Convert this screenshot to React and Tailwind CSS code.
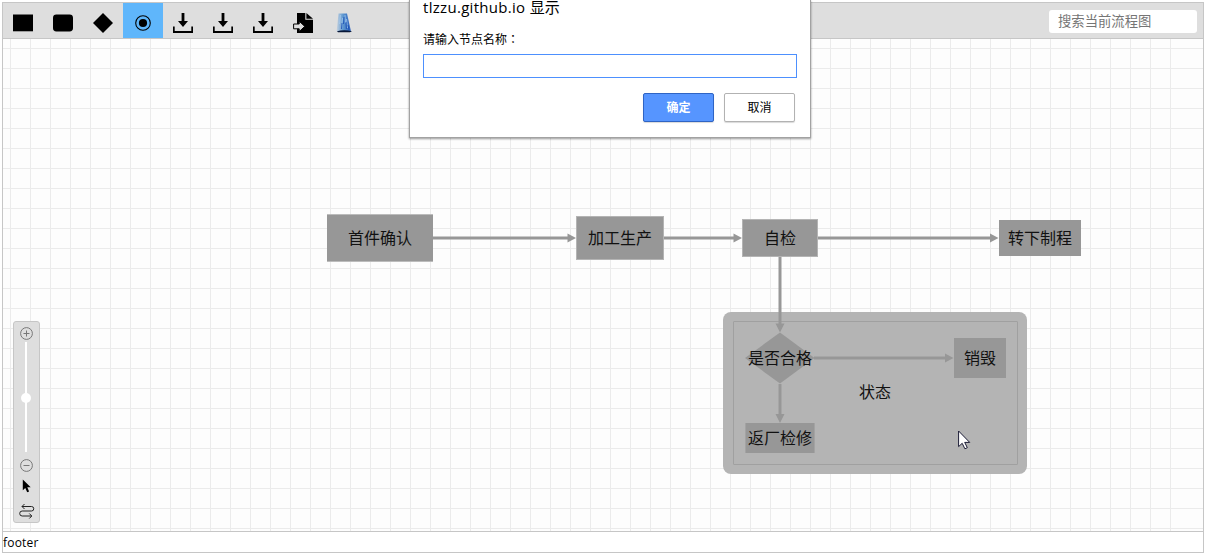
import React from "react";

const nodes = [
  { text: "首件确认", box: "left-[324px] top-[175px] w-[106px] h-[48px] border-y border-[#bcbcbc]" },
  { text: "加工生产", box: "left-[573px] top-[177px] w-[88px] h-[44px] border border-[#b4b4b4]" },
  { text: "自检", box: "left-[739px] top-[180px] w-[76px] h-[38px] border border-[#b4b4b4]" },
  { text: "转下制程", box: "left-[996px] top-[181px] w-[82px] h-[36px]" },
  { text: "销毁", box: "left-[951px] top-[299px] w-[52px] h-[40px]" },
  { text: "返厂检修", box: "left-[742px] top-[384px] w-[70px] h-[30px] border-x border-[#a3a3a3] pb-px" },
];

function Download() {
  return (
    <svg className="size-5" viewBox="0 0 20 20">
      <path d="M8.6 0h2.8v8h3.6L10 14 5 8h3.6z" />
      <path d="M0 13.5h1.7v4.6h16.6v-4.6H20V20H0z" />
    </svg>
  );
}

function Tool({ active, children }) {
  return (
    <div className={"flex h-[35px] w-10 items-center justify-center pt-[5px] " + (active ? "bg-[#5fb6fb]" : "")}>
      {children}
    </div>
  );
}

function Toolbar() {
  return (
    <div className="flex h-9 shrink-0 justify-between border-b border-[#c6c6c6] bg-[#dedede]">
      <div className="flex">
        <Tool><svg className="size-5" viewBox="0 0 20 20"><path d="M0 1.5h20V18.3H0z" /></svg></Tool>
        <Tool><svg className="size-5" viewBox="0 0 20 20"><rect y="1.5" width="20" height="17" rx="3.4" /></svg></Tool>
        <Tool><svg className="size-5" viewBox="0 0 20 20"><path d="M10 0l10 10-10 10L0 10z" /></svg></Tool>
        <Tool active>
          <svg className="size-5" viewBox="0 0 20 20">
            <circle cx="10" cy="10" r="7.3" fill="none" stroke="#000" strokeWidth="1.1" />
            <circle cx="10" cy="10" r="4.1" />
          </svg>
        </Tool>
        <Tool><Download /></Tool>
        <Tool><Download /></Tool>
        <Tool><Download /></Tool>
        <Tool>
          <svg className="size-5" viewBox="0 0 20 20">
            <path d="M4 0h8.3v6.700H20V20H4z" />
            <path d="M13.400 0L20 5.800h-6.600z" />
            <path d="M.6 11h5.600V8.200l5.600 5.200-5.600 5.200v-2.800H.6z" fill="#dedede" stroke="#000" strokeWidth="1" />
          </svg>
        </Tool>
        <Tool>
          <svg className="size-5" viewBox="0 0 20 20">
            <defs>
              <linearGradient id="flask" x1="0" x2="1">
                <stop offset="0" stopColor="#c6d3e0" />
                <stop offset="0.45" stopColor="#5d97d0" />
                <stop offset="1" stopColor="#2a5fbc" />
              </linearGradient>
            </defs>
            <path d="M5.500 .5h8.500L18 18.500H3.600z" fill="url(#flask)" />
            <path d="M7.500 2L6.500 11M9.500 5l-1 10M12 2l.5 8M13.500 6l1 9" stroke="#a9cdf0" strokeWidth=".7" />
            <path d="M11 4l-.5 7M13 9l.4 7M9 10l-.6 6M15 12l1 5" stroke="#174bb2" strokeWidth=".8" />
            <path d="M4 18.200Q11 16.200 19 18.200L17 19.200H5z" fill="#061637" />
          </svg>
        </Tool>
      </div>
      <input
        className="mr-1.5 mt-[7px] h-[23px] w-[148px] rounded-[3px] bg-white px-[9px] pb-[2px] text-[13.33px] outline-none placeholder:text-[#757575]"
        placeholder="搜索当前流程图"
      />
    </div>
  );
}

function Edges() {
  return (
    <svg className="absolute left-0 top-0" width="1200" height="492" viewBox="3 39 1200 492">
      <path d="M780 332.500L814.500 358 780 383.500 745 358z" fill="#979797" />
      <g stroke="#979797" strokeWidth="3" fill="none">
        <path d="M433 238H569M664 238H735M818 238H992M780 257V325M814 358H947M780 384V415" />
      </g>
      <g fill="#979797">
        <path d="M576 238l-8.500-4.500v9zM742 238l-8.500-4.500v9zM998.500 238l-8.500-4.500v9zM953.500 358l-8.500-4.500v9zM780 332.500l-4.500-9h9zM780 423l-4.500-9h9z" />
      </g>
    </svg>
  );
}

function ZoomPanel() {
  return (
    <div className="absolute left-[10px] top-[282px] flex h-[202px] w-[27px] flex-col items-center rounded-[3px] border border-[#c6c6c6] bg-[#dedede]">
      <svg className="mt-[5px] h-[13px] w-[13px] shrink-0" viewBox="0 0 13 13" fill="none" stroke="#777" strokeWidth="1">
        <circle cx="6.500" cy="6.500" r="5.900" />
        <path d="M3.500 6.500h6M6.500 3.500v6" />
      </svg>
      <div className="mr-px mt-[2px] flex h-[110px] w-[2px] shrink-0 items-center justify-center bg-white">
        <div className="relative top-[0.5px] size-[10px] shrink-0 rounded-full bg-white" />
      </div>
      <svg className="mt-[7px] h-[13px] w-[13px] shrink-0" viewBox="0 0 13 13" fill="none" stroke="#777" strokeWidth="1">
        <circle cx="6.500" cy="6.500" r="5.900" />
        <path d="M3.500 6.500h6" />
      </svg>
      <svg className="mt-[7px] h-[14px] w-[9px] shrink-0" viewBox="0 0 9 14">
        <path d="M.8.500v10.700l2.500-2.300 1.900 4.300 1.900-.8-1.800-4.100h3.400z" />
      </svg>
      <svg className="mt-[10px] h-[16px] w-[16px] shrink-0" viewBox="0 0 16 16" fill="none" stroke="#222" strokeWidth="1">
        <path d="M3 3.500h9.500a2.250 2.250 0 0 1 0 4.500H3.200a2.500 2.500 0 0 0 0 5H12.500M5.500 1L3 3.500 5.500 6M10.300 10.500l2.500 2.500-2.500 2.500" />
      </svg>
    </div>
  );
}

function Canvas() {
  return (
    <div className="relative h-[492px] shrink-0 bg-[linear-gradient(#ebebeb_1px,transparent_1px)] bg-[length:20px_20px] bg-[position:0_9px]">
      <div className="h-full w-[1180px] bg-[linear-gradient(90deg,#ebebeb_1px,transparent_1px)] bg-[length:20px_20px] bg-[position:7px_0]" />
      <div className="absolute left-[720px] top-[272.500px] h-[162px] w-[304px] rounded-[8px] bg-[#b4b4b4]" />
      <div className="absolute left-[730px] top-[282px] flex h-[144px] w-[285px] items-center justify-center rounded-[1px] border border-[#a0a0a0] pb-[2px] pr-px text-[16px] leading-none text-[#111]">
        状态
      </div>
      <Edges />
      {nodes.map((n) => (
        <div key={n.text} className={"absolute flex items-center justify-center whitespace-nowrap bg-[#979797] text-[16px] leading-none text-[#111] " + n.box}>
          {n.text}
        </div>
      ))}
      <div className="absolute left-[742px] top-[304px] flex h-[30px] w-[70px] items-center justify-center whitespace-nowrap text-[16px] leading-none text-[#111]">
        是否合格
      </div>
      <ZoomPanel />
      <svg className="absolute left-[955px] top-[391px]" width="13" height="20" viewBox="0 0 13 20">
        <path d="M.6 1v15.600l3.600-3.300 2.700 5.500 2.400-1.100-2.600-5.300h5z" fill="#fff" stroke="#1b1b35" strokeWidth="1" />
      </svg>
    </div>
  );
}

function Prompt() {
  return (
    <div className="absolute left-[409px] top-0 h-[138px] w-[402px] border border-t-0 border-[#a2a2a2] bg-white px-[13px] shadow-[0_1px_2px_rgba(0,0,0,0.4)]">
      <div className="h-[14px] whitespace-nowrap text-[15px] leading-[14px] text-black">
        <span className="tracking-[0.3px]">tlzzu.github.io </span>显示
      </div>
      <div className="mt-[17px] h-4 text-[12px] leading-4 text-black">
        请输入节点名称<span className="font-['Noto_Sans_CJK_TC',sans-serif]" lang="zh-TW">：</span>
      </div>
      <input className="mt-[7px] block h-6 w-[374px] border border-[#4d90fe] bg-white px-1 text-[12px] outline-none" />
      <div className="mt-[15px] flex justify-end gap-[10px] pr-[2px] text-[12px]">
        <button className="h-[29px] w-[71px] rounded-[2px] border border-[#2f64c4] bg-[#5695ff] font-bold text-white shadow-[0_1px_1px_rgba(0,0,0,0.15)]">确定</button>
        <button className="h-[29px] w-[71px] rounded-[2px] border border-[#b2b2b2] bg-white text-black shadow-[0_1px_1px_rgba(0,0,0,0.15)]">取消</button>
      </div>
    </div>
  );
}

export default function App() {
  return (
    <div className="relative h-[555px] w-[1206px] overflow-hidden bg-white p-[2px] font-['Open_Sans','Noto_Sans_CJK_SC',sans-serif]">
      <div className="flex h-[551px] w-[1202px] flex-col border border-[#c6c6c6] bg-[#fdfdfd]">
        <Toolbar />
        <Canvas />
        <div className="h-[21px] shrink-0 border-t border-[#c6c6c6] bg-white pt-px text-[12px] leading-5 tracking-[0.2px] text-black">footer</div>
      </div>
      <Prompt />
    </div>
  );
}
